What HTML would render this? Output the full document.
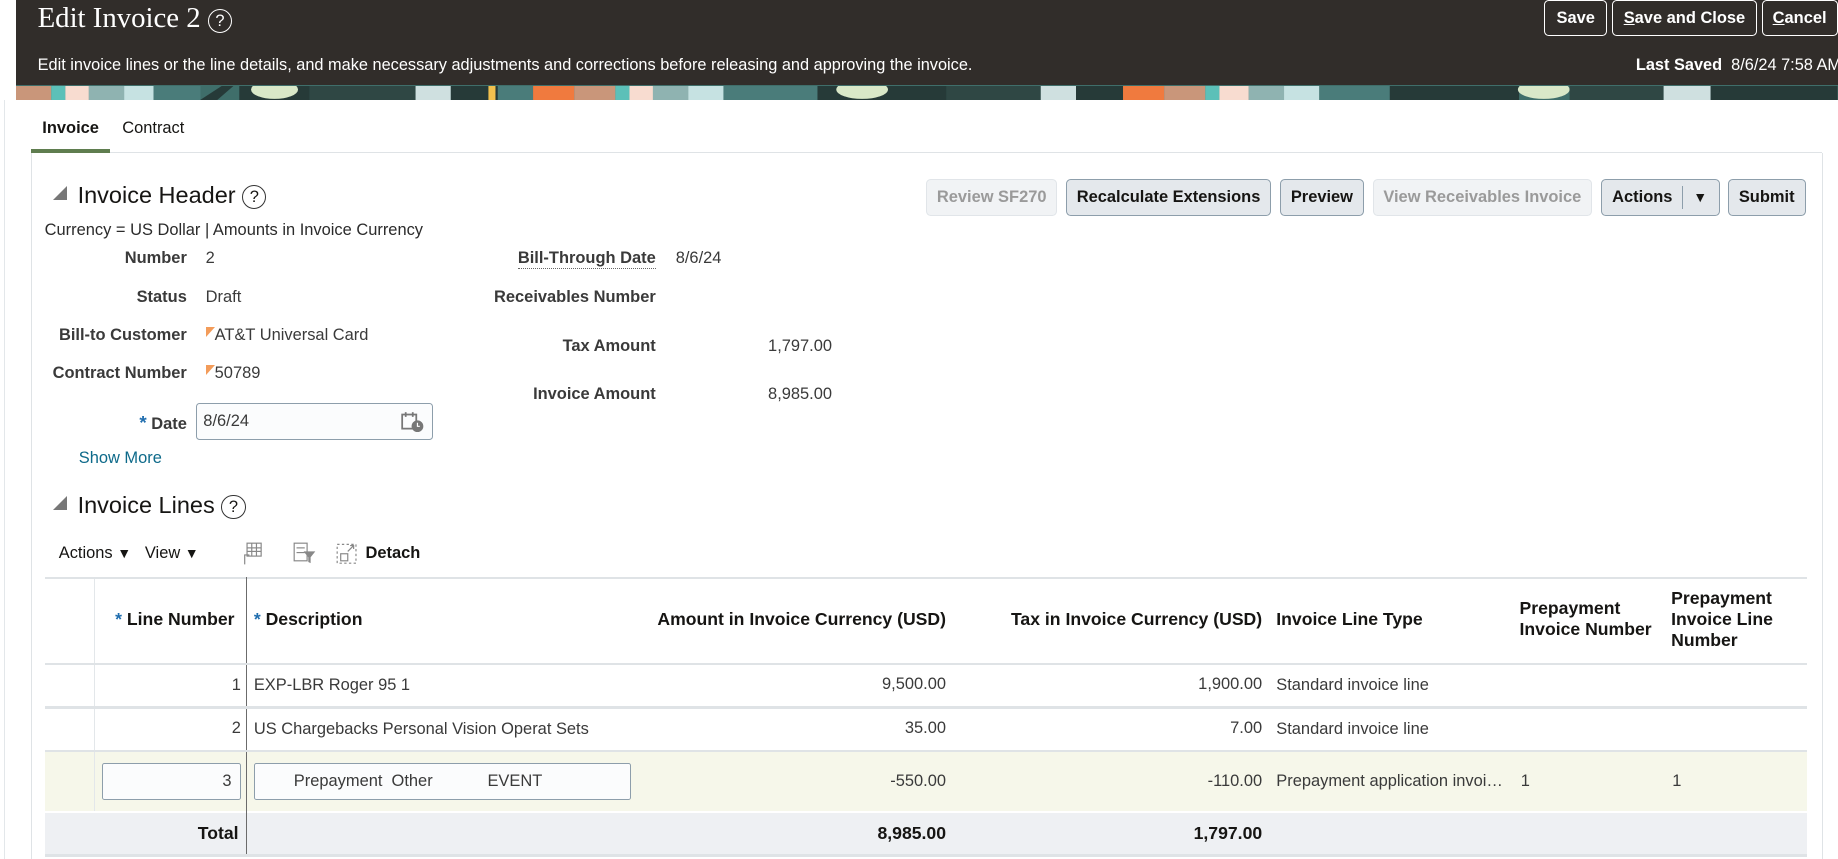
<!DOCTYPE html>
<html><head><meta charset="utf-8">
<style>
html,body{margin:0;padding:0;background:#fff;overflow:hidden}
body{width:1564px;height:731px;zoom:1.17519;font-family:"Liberation Sans",Arial,sans-serif;color:#161513;position:relative}
.a{position:absolute;white-space:nowrap}
.hdr{position:absolute;left:14px;top:0;width:1550px;height:72px;background:#312d2a}
.ban{position:absolute;left:14px;top:72px;width:1550px;height:13px;overflow:hidden;background:#3f6e6a}
.tb{position:absolute;top:0;height:29px;border:1px solid #fff;border-radius:4px;color:#fff;font-weight:bold;font-size:14px;line-height:29px;text-align:center;box-sizing:content-box}
.btn{position:absolute;top:152px;height:30px;border:1px solid #8d9eab;border-radius:4px;background:#e4e8ec;font-weight:bold;font-size:14px;line-height:30px;text-align:center;color:#161513}
.dis{background:#f1f3f5;border-color:#e1e5e9;color:#9a9a9a}
.lbl{position:absolute;font-weight:bold;font-size:14px;color:#3a3a3a;text-align:right;white-space:nowrap}
.val{position:absolute;font-size:14px;color:#3a3a3a;white-space:nowrap}
.help{display:inline-block;width:19px;height:19px;border:1.3px solid #333;border-radius:50%;text-align:center;line-height:19px;font-size:14px;font-weight:normal;vertical-align:middle}
.th{position:absolute;font-weight:bold;font-size:15px;color:#161513;line-height:18px}
.td{position:absolute;font-size:14px;color:#3a3a3a;white-space:nowrap}
.hl{position:absolute;height:1px;background:#dfe3e6;left:38px;width:1500px}
.flag{display:inline-block;width:0;height:0;border-top:9px solid #f39c5a;border-right:8px solid transparent;vertical-align:top;margin-top:1px}
.star{color:#1f6dae}
</style></head><body>
<div class="hdr"></div>
<div class="ban">
<svg width="1550" height="13">
<rect x="0" y="0" width="30" height="13" fill="#c9967a"/><rect x="30" y="0" width="12" height="13" fill="#5cc0b8"/><rect x="42" y="0" width="20" height="13" fill="#f8dcd0"/><rect x="62" y="0" width="30" height="13" fill="#8fb3b1"/><rect x="92" y="0" width="25" height="13" fill="#c6e2e2"/>
<rect x="117" y="0" width="40" height="13" fill="#4a7c7a"/><polygon points="155,13 175,0 185,0 170,13" fill="#263a38"/>
<rect x="190" y="0" width="60" height="13" fill="#263a38"/><ellipse cx="220" cy="3" rx="20" ry="8" fill="#d9e8c8"/>
<rect x="250" y="0" width="90" height="13" fill="#2f4744"/><rect x="340" y="0" width="30" height="13" fill="#cfe0e0"/>
<rect x="370" y="0" width="40" height="13" fill="#263a38"/><rect x="402" y="0" width="6" height="13" fill="#f2c14e"/>
<rect x="410" y="0" width="30" height="13" fill="#4a7c7a"/><rect x="440" y="0" width="35" height="13" fill="#f07a3e"/><rect x="475" y="0" width="35" height="13" fill="#c9967a"/>
<rect x="510" y="0" width="12" height="13" fill="#5cc0b8"/><rect x="522" y="0" width="20" height="13" fill="#f8dcd0"/><rect x="542" y="0" width="30" height="13" fill="#8fb3b1"/><rect x="572" y="0" width="30" height="13" fill="#c6e2e2"/>
<rect x="602" y="0" width="80" height="13" fill="#4a7c7a"/><rect x="682" y="0" width="110" height="13" fill="#263a38"/><ellipse cx="720" cy="3" rx="22" ry="8" fill="#d9e8c8"/>
<rect x="792" y="0" width="80" height="13" fill="#2f4744"/><rect x="872" y="0" width="30" height="13" fill="#cfe0e0"/><rect x="902" y="0" width="40" height="13" fill="#263a38"/>
<rect x="942" y="0" width="35" height="13" fill="#f07a3e"/><rect x="977" y="0" width="35" height="13" fill="#c9967a"/><rect x="1012" y="0" width="12" height="13" fill="#5cc0b8"/><rect x="1024" y="0" width="25" height="13" fill="#f8dcd0"/>
<rect x="1049" y="0" width="30" height="13" fill="#8fb3b1"/><rect x="1079" y="0" width="30" height="13" fill="#c6e2e2"/><rect x="1109" y="0" width="60" height="13" fill="#4a7c7a"/>
<rect x="1169" y="0" width="110" height="13" fill="#263a38"/><ellipse cx="1300" cy="3" rx="22" ry="8" fill="#d9e8c8"/><rect x="1322" y="0" width="80" height="13" fill="#2f4744"/>
<rect x="1402" y="0" width="40" height="13" fill="#cfe0e0"/><rect x="1442" y="0" width="108" height="13" fill="#263a38"/>
</svg></div>
<div class="a" style="left:32px;top:2px;font-family:'Liberation Serif',serif;font-size:24.5px;color:#fff">Edit Invoice 2 <span class="help" style="border-color:#fff;color:#fff;font-family:'Liberation Sans',sans-serif;width:19px;height:19px;line-height:19px;font-size:14px">?</span></div>
<div class="tb" style="left:1314px;width:52px">Save</div>
<div class="tb" style="left:1372px;width:121px"><u>S</u>ave and Close</div>
<div class="tb" style="left:1499px;width:63px"><u>C</u>ancel</div>
<div class="a" style="left:32px;top:48px;font-size:13.9px;color:#fff">Edit invoice lines or the line details, and make necessary adjustments and corrections before releasing and approving the invoice.</div>
<div class="a" style="left:1392px;top:48px;font-size:13.9px;color:#fff"><b>Last Saved</b>&nbsp; 8/6/24 7:58 AM</div>

<div class="a" style="left:3px;top:85px;width:1px;height:646px;background:#e3e7ea"></div>
<div class="a" style="left:36px;top:101px;font-size:14px;font-weight:bold">Invoice</div>
<div class="a" style="left:104px;top:101px;font-size:14px;color:#161513">Contract</div>
<div class="a" style="left:26px;top:127px;width:68px;height:3px;background:#5f7d4f"></div>
<div class="a" style="left:94px;top:129px;width:1456px;height:1px;background:#dfe3e6"></div>
<div class="a" style="left:1550px;top:130px;width:1px;height:601px;background:#dfe3e6"></div>
<div class="a" style="left:26px;top:130px;width:1px;height:601px;background:#dfe3e6"></div>

<div class="a" style="left:45px;top:158px;width:0;height:0;border-left:12px solid transparent;border-bottom:12px solid #777"></div>
<div class="a" style="left:66px;top:155px;font-size:20px;color:#161513">Invoice Header <span class="help">?</span></div>
<div class="btn dis" style="left:788px;width:110px">Review SF270</div>
<div class="btn" style="left:907px;width:173px">Recalculate Extensions</div>
<div class="btn" style="left:1089px;width:70px">Preview</div>
<div class="btn dis" style="left:1168px;width:185px">View Receivables Invoice</div>
<div class="btn" style="left:1362px;width:100px;text-align:left"><span style="padding-left:9px">Actions</span><span style="position:absolute;left:68px;top:5px;width:1px;height:20px;background:#8d9eab"></span><span style="position:absolute;left:78px;top:0;font-size:12px">&#9660;</span></div>
<div class="btn" style="left:1470px;width:65px">Submit</div>

<div class="val" style="left:38px;top:188px;color:#2b2b2b">Currency = US Dollar | Amounts in Invoice Currency</div>
<div class="lbl" style="right:1405px;top:212px">Number</div><div class="val" style="left:175px;top:212px">2</div>
<div class="lbl" style="right:1405px;top:245px">Status</div><div class="val" style="left:175px;top:245px">Draft</div>
<div class="lbl" style="right:1405px;top:277px">Bill-to Customer</div><div class="val" style="left:175px;top:277px"><span class="flag"></span>AT&amp;T Universal Card</div>
<div class="lbl" style="right:1405px;top:310px">Contract Number</div><div class="val" style="left:175px;top:310px"><span class="flag"></span>50789</div>
<div class="lbl" style="right:1405px;top:351px"><span class="star" style="font-size:16px">*</span> Date</div>
<div class="a" style="left:167px;top:343px;width:200px;height:30px;border:1px solid #8d9eab;border-radius:3px;background:#fbfcfd"></div>
<div class="val" style="left:173px;top:351px">8/6/24</div>
<svg class="a" style="left:341px;top:350px" width="20" height="18"><rect x="1" y="3" width="12" height="12" fill="none" stroke="#777" stroke-width="1.5"/><line x1="4" y1="1" x2="4" y2="5" stroke="#777" stroke-width="1.5"/><line x1="10" y1="1" x2="10" y2="5" stroke="#777" stroke-width="1.5"/><circle cx="14" cy="13" r="5" fill="#777"/><path d="M14 10v3h2" stroke="#fff" fill="none"/></svg>
<div class="a" style="left:67px;top:382px;font-size:14px;color:#0e6a8a">Show More</div>

<div class="lbl" style="right:1006px;top:212px;border-bottom:1px dotted #666">Bill-Through Date</div><div class="val" style="left:575px;top:212px">8/6/24</div>
<div class="lbl" style="right:1006px;top:245px">Receivables Number</div>
<div class="lbl" style="right:1006px;top:287px">Tax Amount</div><div class="val" style="right:856px;top:287px">1,797.00</div>
<div class="lbl" style="right:1006px;top:328px">Invoice Amount</div><div class="val" style="right:856px;top:328px">8,985.00</div>

<div class="a" style="left:45px;top:422px;width:0;height:0;border-left:12px solid transparent;border-bottom:12px solid #777"></div>
<div class="a" style="left:66px;top:419px;font-size:20px;color:#161513">Invoice Lines <span class="help">?</span></div>

<div class="a" style="left:50px;top:463px;font-size:14px">Actions <span style="font-size:12px">&#9660;</span>&nbsp;&nbsp; View <span style="font-size:12px">&#9660;</span></div>
<svg class="a" style="left:204px;top:461px" width="20" height="20"><g stroke="#888" fill="none"><rect x="6" y="1" width="12" height="11"/><line x1="6" y1="5" x2="18" y2="5"/><line x1="6" y1="8" x2="18" y2="8"/><line x1="10" y1="1" x2="10" y2="12"/><line x1="14" y1="1" x2="14" y2="12"/><path d="M4 19v-8h4"/></g></svg>
<svg class="a" style="left:249px;top:461px" width="20" height="20"><g stroke="#888" fill="none"><rect x="1" y="1" width="11" height="15"/><line x1="3" y1="5" x2="10" y2="5"/><line x1="3" y1="9" x2="10" y2="9"/></g><path d="M9 8h10l-4 5v5l-2-1v-4z" fill="#888"/></svg>
<svg class="a" style="left:286px;top:461px" width="20" height="20"><rect x="1" y="2" width="16" height="16" fill="none" stroke="#888" stroke-dasharray="2 2"/><rect x="4" y="10" width="6" height="6" fill="none" stroke="#888"/><path d="M10 8l5-5M12 3h3v3" stroke="#888" fill="none"/></svg>
<div class="a" style="left:311px;top:463px;font-size:14px;font-weight:bold">Detach</div>

<div class="hl" style="top:491px;height:2px"></div>
<div class="a" style="left:80px;top:493px;width:1px;height:197px;background:#e3e7ea"></div>
<div class="a" style="left:209px;top:491px;width:1px;height:236px;background:#6b6b6b"></div>
<div class="th" style="left:98px;top:518px"><span class="star">*</span> Line Number</div>
<div class="th" style="left:216px;top:518px"><span class="star">*</span> Description</div>
<div class="th" style="right:759px;top:518px">Amount in Invoice Currency (USD)</div>
<div class="th" style="right:490px;top:518px">Tax in Invoice Currency (USD)</div>
<div class="th" style="left:1086px;top:518px">Invoice Line Type</div>
<div class="th" style="left:1293px;top:509px">Prepayment<br>Invoice Number</div>
<div class="th" style="left:1422px;top:500px">Prepayment<br>Invoice Line<br>Number</div>
<div class="hl" style="top:564px;height:2px"></div>
<div class="td" style="right:1359px;top:575px">1</div><div class="td" style="left:216px;top:575px">EXP-LBR Roger 95 1</div><div class="td" style="right:759px;top:574px">9,500.00</div><div class="td" style="right:490px;top:574px">1,900.00</div><div class="td" style="left:1086px;top:575px">Standard invoice line</div>
<div class="hl" style="top:601px;height:2px"></div>
<div class="td" style="right:1359px;top:612px">2</div><div class="td" style="left:216px;top:613px">US Chargebacks Personal Vision Operat Sets</div><div class="td" style="right:759px;top:612px">35.00</div><div class="td" style="right:490px;top:612px">7.00</div><div class="td" style="left:1086px;top:613px">Standard invoice line</div>
<div class="hl" style="top:638px;height:2px"></div>
<div class="a" style="left:38px;top:640px;width:1500px;height:50px;background:#f6f7ea"></div>
<div class="a" style="left:80px;top:640px;width:1px;height:50px;background:#e3e7ea"></div>
<div class="a" style="left:209px;top:640px;width:1px;height:50px;background:#6b6b6b"></div>
<div class="a" style="left:87px;top:649px;width:116px;height:30px;border:1px solid #8d9eab;border-radius:2px;background:#fbfcfd"></div>
<div class="td" style="right:1367px;top:657px">3</div>
<div class="a" style="left:216px;top:649px;width:319px;height:30px;border:1px solid #8d9eab;border-radius:2px;background:#fbfcfd"></div>
<div class="td" style="left:250px;top:657px">Prepayment&nbsp; Other&nbsp;&nbsp;&nbsp;&nbsp;&nbsp;&nbsp;&nbsp;&nbsp;&nbsp;&nbsp;&nbsp; EVENT</div>
<div class="td" style="right:759px;top:657px">-550.00</div><div class="td" style="right:490px;top:657px">-110.00</div><div class="td" style="left:1086px;top:657px">Prepayment application invoi…</div><div class="td" style="left:1294px;top:657px">1</div><div class="td" style="left:1423px;top:657px">1</div>
<div class="a" style="left:38px;top:692px;width:1500px;height:35px;background:#eef0f3"></div>
<div class="a" style="left:209px;top:692px;width:1px;height:35px;background:#6b6b6b"></div>
<div class="th" style="right:1361px;top:700px">Total</div>
<div class="th" style="right:759px;top:700px">8,985.00</div>
<div class="th" style="right:490px;top:700px">1,797.00</div>
<div class="hl" style="top:727px;height:2px"></div>
</body></html>
